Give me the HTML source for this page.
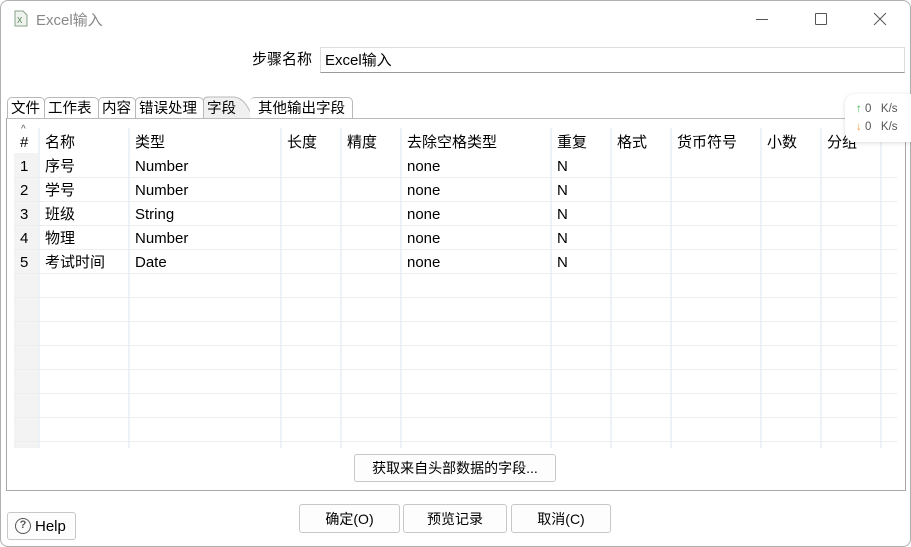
<!DOCTYPE html>
<html><head><meta charset="utf-8"><style>
*{margin:0;padding:0;box-sizing:border-box}
body{width:911px;height:547px;overflow:hidden;background:#fff;font-family:"Liberation Sans","Noto Sans CJK SC",sans-serif;font-size:14px;color:#000;position:relative}
.a{position:absolute}
.vl{position:absolute;top:128px;height:320px;width:2px;background:#edf1f8}
.hl{position:absolute;left:14px;width:883px;height:1px;background:#ebedf0}
.t{position:absolute;font-size:15px;white-space:nowrap;height:24px;line-height:24px}
.btn{position:absolute;border:1px solid #c8c8c8;border-radius:3px;background:#fdfdfd;text-align:center;font-size:14px}
.tab{position:absolute;top:97px;height:22px;border:1px solid #b8b8b8;border-bottom:none;border-radius:5px 5px 0 0;font-size:14.5px;line-height:22px;padding-left:3px;background:#fff}
</style></head><body>
<div class="a" style="left:0;top:0;width:911px;height:547px;border:1px solid #b0b0b0;border-radius:8px"></div>
<svg class="a" style="left:13px;top:10px" width="16" height="18" viewBox="0 0 16 18"><path d="M2 1h8l4 4v11H2z" fill="#eef3ee" stroke="#8aa08a"/><text x="4" y="13" font-size="8" fill="#4a7a4a" font-family="Liberation Sans">X</text></svg>
<div class="t" style="left:36px;top:9px;color:#888;font-size:15px">Excel输入</div>
<div class="a" style="left:756px;top:19px;width:12px;height:1px;background:#555"></div>
<div class="a" style="left:815px;top:13px;width:12px;height:12px;border:1px solid #555;border-radius:1px"></div>
<svg class="a" style="left:873px;top:12px" width="14" height="14"><path d="M1 1L13 13M13 1L1 13" stroke="#555" stroke-width="1"/></svg>
<div class="t" style="left:252px;top:48px">步骤名称</div>
<div class="a" style="left:320px;top:47px;width:585px;height:26px;border:1px solid #ddd;border-bottom-color:#999;background:#fff"></div>
<div class="t" style="left:325px;top:49px">Excel输入</div>
<div class="tab" style="left:7px;width:38px">文件</div>
<div class="tab" style="left:44px;width:55px">工作表</div>
<div class="tab" style="left:98px;width:38px">内容</div>
<div class="tab" style="left:135px;width:69px">错误处理</div>
<svg class="a" style="left:203px;top:96px" width="56" height="24"><path d="M0.5 24V5Q0.5 1 5 1H30Q38 1 44 10Q50 22 56 22V24Z" fill="#f0f0f0" stroke="#b8b8b8"/></svg>
<div class="a" style="left:207px;top:98px;font-size:14.5px;line-height:22px">字段</div>
<div class="tab" style="left:250px;width:103px;padding-left:8px;border-left:none">其他输出字段</div>
<div class="a" style="left:6px;top:118px;width:900px;height:373px;border:1px solid #a8a8a8;border-top:1px solid #bbb;background:#fff"></div>
<div class="a" style="left:14px;top:153px;width:25px;height:295px;background:#f3f3f3"></div>
<div class="vl" style="left:38px"></div><div class="vl" style="left:128px"></div><div class="vl" style="left:280px"></div><div class="vl" style="left:340px"></div><div class="vl" style="left:400px"></div><div class="vl" style="left:550px"></div><div class="vl" style="left:610px"></div><div class="vl" style="left:670px"></div><div class="vl" style="left:760px"></div><div class="vl" style="left:820px"></div><div class="vl" style="left:880px"></div>
<div class="hl" style="top:177px"></div><div class="hl" style="top:201px"></div><div class="hl" style="top:225px"></div><div class="hl" style="top:249px"></div><div class="hl" style="top:273px"></div><div class="hl" style="top:297px"></div><div class="hl" style="top:321px"></div><div class="hl" style="top:345px"></div><div class="hl" style="top:369px"></div><div class="hl" style="top:393px"></div><div class="hl" style="top:417px"></div><div class="hl" style="top:441px"></div>
<div class="a" style="left:21px;top:125px;font-size:10px;color:#555;line-height:10px">^</div>
<div class="t" style="left:20px;top:131px">#</div>
<div class="t" style="left:45px;top:131px">名称</div>
<div class="t" style="left:135px;top:131px">类型</div>
<div class="t" style="left:287px;top:131px">长度</div>
<div class="t" style="left:347px;top:131px">精度</div>
<div class="t" style="left:407px;top:131px">去除空格类型</div>
<div class="t" style="left:557px;top:131px">重复</div>
<div class="t" style="left:617px;top:131px">格式</div>
<div class="t" style="left:677px;top:131px">货币符号</div>
<div class="t" style="left:767px;top:131px">小数</div>
<div class="t" style="left:827px;top:131px">分组</div>

<div class="t" style="left:20px;top:155px">1</div><div class="t" style="left:45px;top:155px">序号</div><div class="t" style="left:135px;top:155px">Number</div><div class="t" style="left:407px;top:155px">none</div><div class="t" style="left:557px;top:155px">N</div>
<div class="t" style="left:20px;top:179px">2</div><div class="t" style="left:45px;top:179px">学号</div><div class="t" style="left:135px;top:179px">Number</div><div class="t" style="left:407px;top:179px">none</div><div class="t" style="left:557px;top:179px">N</div>
<div class="t" style="left:20px;top:203px">3</div><div class="t" style="left:45px;top:203px">班级</div><div class="t" style="left:135px;top:203px">String</div><div class="t" style="left:407px;top:203px">none</div><div class="t" style="left:557px;top:203px">N</div>
<div class="t" style="left:20px;top:227px">4</div><div class="t" style="left:45px;top:227px">物理</div><div class="t" style="left:135px;top:227px">Number</div><div class="t" style="left:407px;top:227px">none</div><div class="t" style="left:557px;top:227px">N</div>
<div class="t" style="left:20px;top:251px">5</div><div class="t" style="left:45px;top:251px">考试时间</div><div class="t" style="left:135px;top:251px">Date</div><div class="t" style="left:407px;top:251px">none</div><div class="t" style="left:557px;top:251px">N</div>
<div class="a" style="left:845px;top:94px;width:80px;height:48px;background:#fff;border-radius:10px;box-shadow:0 1px 5px rgba(0,0,0,.15)"></div>
<div class="a" style="left:856px;top:101px;font-size:11.5px;color:#555;line-height:16px;white-space:nowrap"><span style="color:#3bb54a;font-weight:bold">↑</span> 0 &nbsp;&nbsp;K/s</div>
<div class="a" style="left:856px;top:119px;font-size:11.5px;color:#555;line-height:16px;white-space:nowrap"><span style="color:#f39a3c;font-weight:bold">↓</span> 0 &nbsp;&nbsp;K/s</div>
<div class="btn" style="left:354px;top:454px;width:202px;height:28px;line-height:27px">获取来自头部数据的字段...</div>
<div class="btn" style="left:299px;top:504px;width:101px;height:29px;line-height:28px">确定(O)</div>
<div class="btn" style="left:403px;top:504px;width:104px;height:29px;line-height:28px">预览记录</div>
<div class="btn" style="left:511px;top:504px;width:100px;height:29px;line-height:28px">取消(C)</div>
<div class="btn" style="left:7px;top:512px;width:69px;height:28px"></div>
<div class="a" style="left:15px;top:518px;width:16px;height:16px;border:1.5px solid #555;border-radius:50%;font-size:11px;line-height:13px;text-align:center;font-weight:bold;color:#555">?</div>
<div class="a" style="left:35px;top:516px;font-size:15px;line-height:22px">Help</div>
</body></html>
